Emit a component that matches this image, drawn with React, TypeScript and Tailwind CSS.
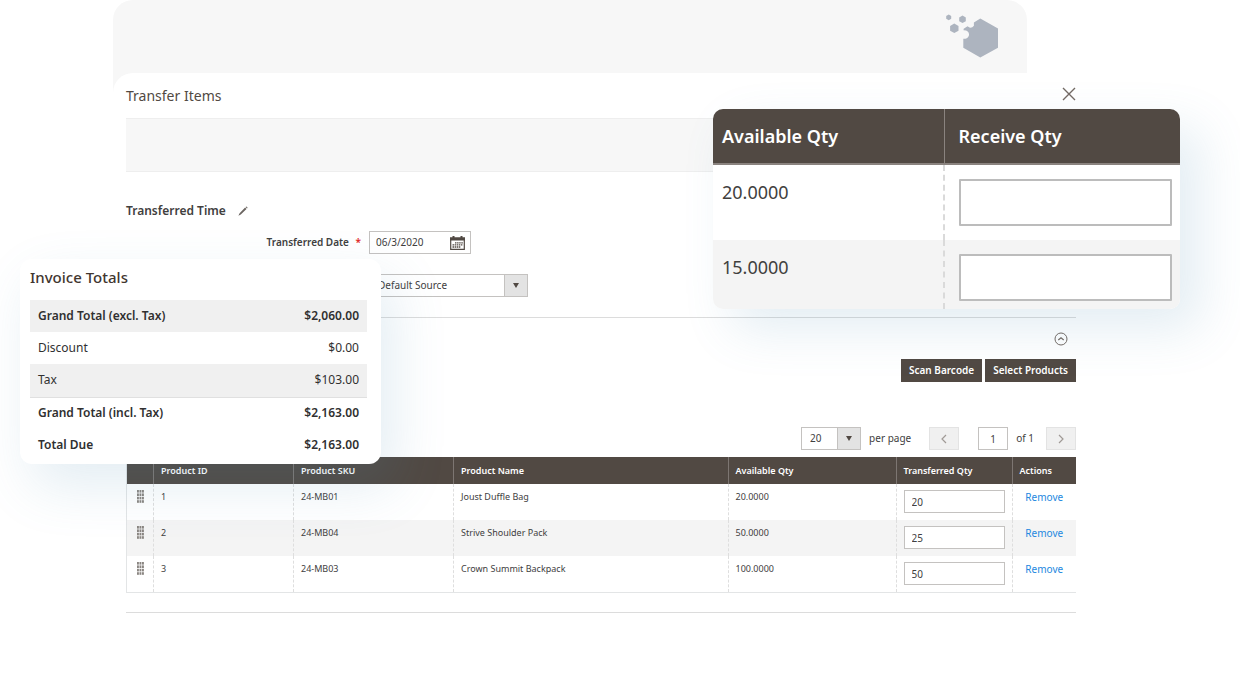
import { useState } from "react"
import type { ReactNode } from "react"

interface Product {
  id: number
  sku: string
  name: string
  available: string
  transferred: string
}

interface TotalRow {
  label: string
  value: string
  bold?: boolean
  shaded?: boolean
}

const products: Product[] = [
  { id: 1, sku: "24-MB01", name: "Joust Duffle Bag", available: "20.0000", transferred: "20" },
  { id: 2, sku: "24-MB04", name: "Strive Shoulder Pack", available: "50.0000", transferred: "25" },
  { id: 3, sku: "24-MB03", name: "Crown Summit Backpack", available: "100.0000", transferred: "50" },
]

const totals: TotalRow[] = [
  { label: "Grand Total (excl. Tax)", value: "$2,060.00", bold: true, shaded: true },
  { label: "Discount", value: "$0.00" },
  { label: "Tax", value: "$103.00", shaded: true },
  { label: "Grand Total (incl. Tax)", value: "$2,163.00", bold: true },
  { label: "Total Due", value: "$2,163.00", bold: true },
]

const quantities = ["20.0000", "15.0000"]

function Logo() {
  return (
    <svg viewBox="0 0 52 44" className="h-11 w-[52px] text-[#adb4bf]" fill="currentColor" aria-hidden="true">
      <path d="M34.3 4.6 52 14.4V33.8L34.3 43.4 17.3 33.8V24.7C20.5 25.4 23.2 23.2 23 20.3 23.1 18 21 16 17.5 16.2L17.7 14.7 21.5 12.2 23.5 13.6Q26 14.2 27.9 11.8V8.4Z" />
      <path d="M2.7.6 5.2 2v2.8L2.7 6.2.2 4.8V2Z" />
      <path d="m16.5 1.6 3.3 1.8v3.8L16.5 9l-3.3-1.8V3.4Z" />
      <path d="m8.3 9.6 4.2 2.3v4.8L8.3 19l-4.2-2.3v-4.8Z" />
    </svg>
  )
}

function CloseIcon() {
  return (
    <svg viewBox="0 0 14 14" className="size-3.5" fill="none" stroke="currentColor" strokeWidth="1.4" aria-hidden="true">
      <path d="m1 1 12 12M13 1 1 13" />
    </svg>
  )
}

function PencilIcon() {
  return (
    <svg viewBox="0 0 10 10" className="size-2.5" fill="#6b6561" aria-hidden="true">
      <path d="M8.4.4 9.7 1.7 9 2.5 7.6 1.1ZM7.1 1.6 8.5 3 2.8 8.5.4 9.7 1.6 7.2Z" />
    </svg>
  )
}

function CalendarIcon() {
  return (
    <svg viewBox="0 0 15 14" className="h-3.5 w-[15px] shrink-0" aria-hidden="true">
      <path d="M.7 2v11.3h13.6V2" fill="none" stroke="#514943" strokeWidth="1.2" />
      <path d="M0 1.2h2.5V0h2v1.2h6V0h2v1.2H15V4.5H0Z" fill="#514943" />
      <path d="M5 6.8h8M2.5 8.9h10.5M2.5 11h8" stroke="#514943" strokeWidth="1.3" strokeDasharray="1.5 .6" />
    </svg>
  )
}

function CollapseIcon() {
  return (
    <svg viewBox="0 0 14 14" className="size-3.5" fill="none" stroke="currentColor" aria-hidden="true">
      <circle cx="7" cy="7" r="6" />
      <path d="M4.3 8 7 5.7 9.7 8" strokeWidth="1.2" />
    </svg>
  )
}

function Chevron({ direction }: { direction: "left" | "right" }) {
  return (
    <svg viewBox="0 0 6 10" className="h-2.5 w-1.5" fill="none" stroke="currentColor" strokeWidth="1.2" aria-hidden="true">
      <path d={direction === "left" ? "M5 1 1 5l4 4" : "m1 1 4 4-4 4"} />
    </svg>
  )
}

function DragHandle() {
  return (
    <svg viewBox="0 0 7 13" className="mx-auto h-[13px] w-[7px]" fill="#8a8581" aria-hidden="true">
      {[0, 1, 2, 3].map((row) =>
        [0, 1, 2].map((col) => <rect key={`${row}-${col}`} x={col * 2.5} y={row * 3.4} width="1.9" height="2.6" />),
      )}
    </svg>
  )
}

function SelectBox({ id, className, children }: { id: string; className: string; children: ReactNode }) {
  return (
    <div className={`relative flex h-[23px] border border-[#c4c2c0] bg-white ${className}`}>
      <select id={id} className="w-full appearance-none bg-transparent px-2 text-[10px] outline-none">
        {children}
      </select>
      <span className="pointer-events-none absolute inset-y-0 right-0 flex w-[23px] items-center justify-center border-l border-[#c4c2c0] bg-[#e3e3e3]">
        <svg viewBox="0 0 6 5" className="h-[5px] w-1.5" fill="#514943" aria-hidden="true">
          <path d="M0 0h6L3 5Z" />
        </svg>
      </span>
    </div>
  )
}

function InvoiceTotals() {
  return (
    <section className="absolute top-[259px] left-5 w-[361px] rounded-xl bg-white px-[10px] pb-[3px] shadow-[12px_22px_54px_rgba(80,140,180,0.16)]">
      <h2 className="h-[41px] pt-1 text-[15px] leading-7 font-medium text-[#41362f]">Invoice Totals</h2>
      <table className="w-[337px] text-[12px] text-[#303030]">
        <tbody>
          {totals.map((row) => (
            <tr
              key={row.label}
              className={`${row.shaded ? "bg-[#f0f0f0]" : ""} ${row.label === "Tax" ? "h-[33px] border-b border-[#e0e0e0]" : "h-8"} ${row.bold ? "font-semibold" : "font-normal"}`}
            >
              <th scope="row" className={`px-2 text-left ${row.bold ? "font-semibold" : "font-normal"}`}>
                {row.label}
              </th>
              <td className="px-2 text-right">{row.value}</td>
            </tr>
          ))}
        </tbody>
      </table>
    </section>
  )
}

function ReceiveQuantities() {
  return (
    <section className="absolute top-[109px] right-[60px] w-[467px] overflow-hidden rounded-[10px] bg-white shadow-[20px_20px_50px_rgba(80,140,180,0.16)]">
      <table className="w-full table-fixed text-left text-[#41403e]">
        <thead>
          <tr className="h-[55px] border-b-2 border-[#8a837f] bg-[#514943] text-[18px] text-white">
            <th className="w-[231px] border-r border-[#8a837f] px-[9px] font-semibold">Available Qty</th>
            <th className="px-3.5 font-semibold">Receive Qty</th>
          </tr>
        </thead>
        <tbody>
          {quantities.map((qty, i) => (
            <tr key={qty} className="align-top text-[18px] even:bg-[#f4f4f4]">
              <td className="border-r-2 border-dashed border-[#dadada] px-[9px] pt-[13px] leading-7">{qty}</td>
              <td className={`pt-3.5 pr-2 pl-3.5 ${i === 0 ? "pb-3.5" : "pb-2"}`}>
                <input
                  aria-label={`Receive quantity for ${qty}`}
                  className="block h-[47px] w-full rounded-[1px] border-2 border-[#bcbcbc] bg-white px-3 outline-none"
                />
              </td>
            </tr>
          ))}
        </tbody>
      </table>
    </section>
  )
}

function ProductTable() {
  return (
    <table className="mt-[7px] w-full table-fixed border-b border-l border-[#e3e5e6] text-left text-[9px] text-[#41403e]">
      <colgroup>
        <col className="w-[27px]" />
        <col className="w-[140px]" />
        <col className="w-[160px]" />
        <col />
        <col className="w-[168px]" />
        <col className="w-[116px]" />
        <col className="w-16" />
      </colgroup>
      <thead>
        <tr className="h-[27px] bg-[#514943] text-white *:border-r *:border-[#7d7672] *:px-[7px] *:font-semibold *:last:border-r-0">
          <td />
          <th>Product ID</th>
          <th>Product SKU</th>
          <th>Product Name</th>
          <th>Available Qty</th>
          <th>Transferred Qty</th>
          <th>Actions</th>
        </tr>
      </thead>
      <tbody>
        {products.map((product) => (
          <tr
            key={product.id}
            className="h-9 align-top even:bg-[#f4f4f4] *:border-r *:border-dashed *:border-[#dedede] *:px-[7px] *:pt-[6px] *:leading-[14px] *:last:border-r-0"
          >
            <td>
              <DragHandle />
            </td>
            <td>{product.id}</td>
            <td>{product.sku}</td>
            <td>{product.name}</td>
            <td>{product.available}</td>
            <td>
              <input
                aria-label={`Transferred quantity of ${product.name}`}
                defaultValue={product.transferred}
                className="block h-[23px] w-full border border-[#c4c2c0] bg-white px-[7px] text-[10px] outline-none"
              />
            </td>
            <td>
              <a href="#remove" className="block text-center text-[10px] text-[#2388e0]">
                Remove
              </a>
            </td>
          </tr>
        ))}
      </tbody>
    </table>
  )
}

export default function App() {
  const [page, setPage] = useState("1")

  return (
    <main className="relative bg-white pr-[153px] pl-[113px] font-['Noto_Sans','Open_Sans',sans-serif] text-[#41403e]">
      <header className="mr-[60px] flex h-[102px] justify-end rounded-t-[20px] bg-[#f7f7f7] pt-3.5 pr-[29px]">
        <Logo />
      </header>

      <div className="-mt-[29px] rounded-[20px] bg-white pr-[11px] pb-[61px] pl-[13px]">
        <div className="flex h-[45px] items-center justify-between">
          <h1 className="text-[14px] text-[#514943]">Transfer Items</h1>
          <button type="button" aria-label="Close" className="pb-1 text-[#736963]">
            <CloseIcon />
          </button>
        </div>
        <div className="h-[54px] border-y border-[#eeeeee] bg-[#f7f7f7]" />

        <div className="mt-[27px] flex h-6 items-center gap-3">
          <h2 className="text-[12px] font-semibold">Transferred Time</h2>
          <button type="button" aria-label="Edit transferred time">
            <PencilIcon />
          </button>
        </div>

        <div className="mt-2 flex items-center">
          <label htmlFor="date" className="w-[243px] pr-2 text-right text-[10px] font-semibold">
            Transferred Date <span className="pl-1 text-[#e22626]">*</span>
          </label>
          <div className="flex h-[23px] w-[102px] items-center border border-[#c4c2c0] bg-white pr-[5px] pl-1.5">
            <input id="date" defaultValue="06/3/2020" className="w-full min-w-0 text-[10px] outline-none" />
            <CalendarIcon />
          </div>
        </div>
        <div className="mt-5 flex items-center">
          <label htmlFor="source" className="w-[243px] pr-2 text-right text-[10px] font-semibold">
            Source
          </label>
          <SelectBox id="source" className="w-[159px]">
            <option>Default Source</option>
          </SelectBox>
        </div>

        <div className="mt-5 flex justify-end border-t border-[#dcdcdc] pt-3.5 pr-2">
          <button type="button" aria-label="Collapse section" className="text-[#736963]">
            <CollapseIcon />
          </button>
        </div>

        <div className="mt-[13px] flex justify-end gap-[3px] text-[10px] font-semibold text-white">
          <button type="button" className="h-[23px] bg-[#514943] px-2">
            Scan Barcode
          </button>
          <button type="button" className="h-[23px] bg-[#514943] px-2">
            Select Products
          </button>
        </div>

        <div className="mt-[45px] flex items-center justify-end text-[10px]">
          <SelectBox id="per-page" className="w-[60px]">
            <option>20</option>
          </SelectBox>
          <label htmlFor="per-page" className="pr-[18px] pl-2">
            per page
          </label>
          <button
            type="button"
            aria-label="Previous page"
            className="flex h-[23px] w-[30px] items-center justify-center border border-[#e3e3e3] bg-[#f0f0f0] text-[#a09a96]"
          >
            <Chevron direction="left" />
          </button>
          <input
            id="page"
            value={page}
            onChange={(e) => setPage(e.target.value)}
            className="ml-[19px] h-[23px] w-[30px] border border-[#c4c2c0] bg-white text-center outline-none"
          />
          <label htmlFor="page" className="pr-3 pl-2">
            of 1
          </label>
          <button
            type="button"
            aria-label="Next page"
            className="flex h-[23px] w-[30px] items-center justify-center border border-[#e3e3e3] bg-[#f0f0f0] text-[#a09a96]"
          >
            <Chevron direction="right" />
          </button>
        </div>

        <ProductTable />
        <hr className="mt-[19px] border-[#dcdcdc]" />
      </div>

      <ReceiveQuantities />
      <InvoiceTotals />
    </main>
  )
}
